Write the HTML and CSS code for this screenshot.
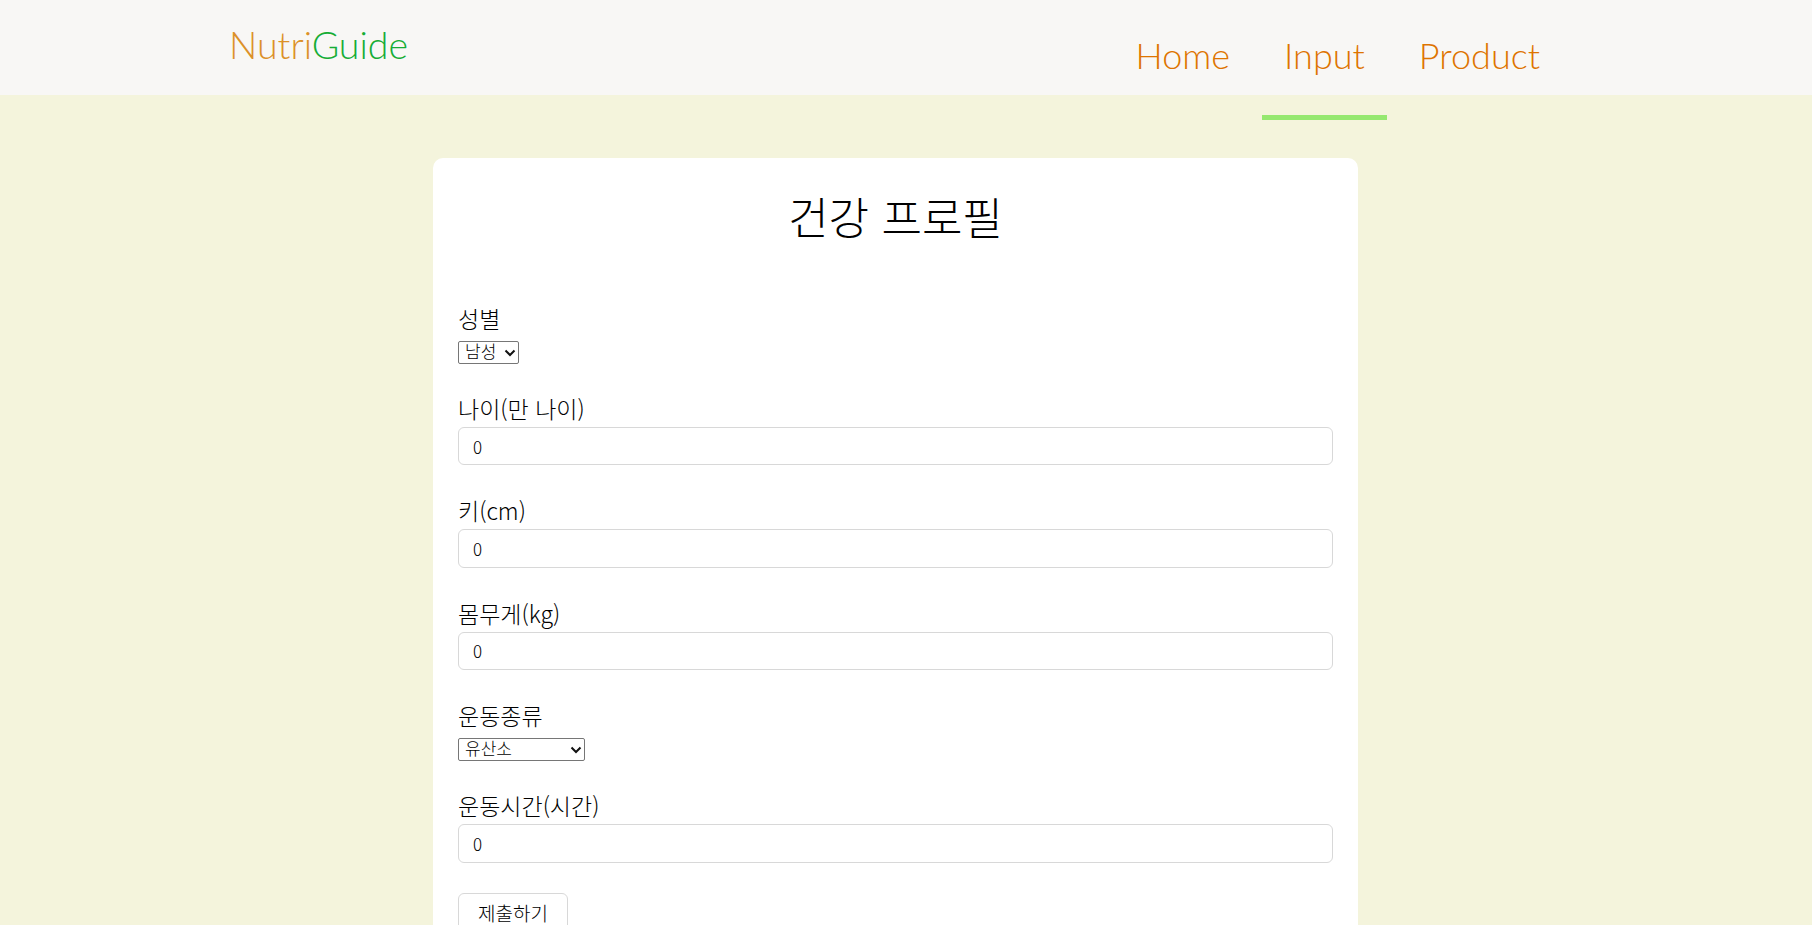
FILE: index.html
```html
<!DOCTYPE html>
<html lang="ko">
<head>
<meta charset="utf-8">
<title>NutriGuide</title>
<link rel="stylesheet" href="styles.css">
</head>
<body>
<header class="site-header">
  <div class="logo"><span class="logo-a">Nutri</span><span class="logo-b">Guide</span></div>
  <nav class="nav">
    <a class="nav-link">Home</a>
    <a class="nav-link active">Input</a>
    <a class="nav-link">Product</a>
  </nav>
</header>
<main class="card">
  <h1 class="title">건강 프로필</h1>
  <form class="form">
    <div class="field">
      <label class="label label-select">성별</label>
      <select class="select"><option>남성</option><option>여성</option></select>
    </div>
    <div class="field">
      <label class="label">나이(만 나이)</label>
      <input class="input" type="text" value="0">
    </div>
    <div class="field">
      <label class="label">키(cm)</label>
      <input class="input" type="text" value="0">
    </div>
    <div class="field">
      <label class="label">몸무게(kg)</label>
      <input class="input" type="text" value="0">
    </div>
    <div class="field">
      <label class="label label-select">운동종류</label>
      <select class="select wide"><option>유산소</option><option>근력</option></select>
    </div>
    <div class="field">
      <label class="label">운동시간(시간)</label>
      <input class="input" type="text" value="0">
    </div>
    <button class="submit" type="button">제출하기</button>
  </form>
</main>
</body>
</html>
```
FILE: styles.css
```css
* { box-sizing: border-box; }
html, body { height: 100%; overflow: hidden; }
body {
  margin: 0;
  background: #f4f4dc;
  color: #000;
  font-family: "Lato", "Noto Sans CJK KR", sans-serif;
}
.site-header {
  height: 95px;
  background: #f8f7f5;
  display: flex;
  justify-content: space-between;
  padding: 0 250px 0 229px;
}
.logo {
  font-size: 37.5px;
  font-weight: 300;
  line-height: 46px;
  padding-top: 22px;
}
.logo-a { color: #dc9128; }
.logo-b { color: #16ad35; }
.nav { display: flex; }
.nav-link {
  position: relative;
  font-size: 36px;
  font-weight: 300;
  color: #de7400;
  padding: 33px 22px 0;
  margin-left: 10px;
  line-height: 44px;
}
.active::after {
  content: "";
  position: absolute;
  left: 0;
  right: 0;
  top: 115px;
  height: 5px;
  background: #95e86f;
}
.card {
  width: 925px;
  margin: 63px 0 0 433px;
  padding: 28px 25px 25px;
  background: #fff;
  border-radius: 10px;
  height: 800px;
}
.title {
  margin: 0 0 57px;
  font-size: 44px;
  line-height: 60px;
  font-weight: 300;
  text-align: center;
  color: #000;
  font-family: "Noto Sans CJK KR", sans-serif;
}
.form { display: flex; flex-direction: column; align-items: flex-start; }
.field { width: 100%; margin-bottom: 30px; }
.label {
  display: block;
  font-family: "Noto Sans CJK KR", sans-serif;
  font-size: 23px;
  font-weight: 300;
  line-height: 30px;
  margin-bottom: 4px;
}
.label-select { margin-bottom: 8px; }
.select {
  display: block;
  appearance: none;
  font-family: "Liberation Sans", "Noto Sans CJK KR", sans-serif;
  font-size: 17px;
  font-weight: 300;
  width: 61px;
  height: 23px;
  line-height: 21px;
  padding: 0 6px;
  margin-bottom: -1px;
  border: 1px solid #767676;
  border-radius: 2px;
  background: #fff url("data:image/svg+xml,%3Csvg xmlns='http://www.w3.org/2000/svg' width='12' height='8' viewBox='0 0 12 8'%3E%3Cpath d='M1.5 1.5 6 6l4.5-4.5' fill='none' stroke='%23111' stroke-width='2'/%3E%3C/svg%3E") no-repeat right 2px center;
  color: #000;
}
.select.wide { width: 127px; }
.input {
  display: block;
  width: 100%;
  height: 38.4px;
  padding: 0 14px;
  border: 1px solid #d8d8d8;
  border-radius: 6px;
  font-family: "Noto Sans CJK KR", sans-serif;
  font-weight: 300;
  font-size: 17px;
  color: #000;
  background: #fff;
}
.submit {
  width: 110px;
  height: 40px;
  background: #fff;
  border: 1px solid #d8d8d8;
  border-radius: 6px;
  font-family: "Noto Sans CJK KR", sans-serif;
  font-weight: 300;
  font-size: 19px;
  color: #000;
  padding: 0;
}
```
